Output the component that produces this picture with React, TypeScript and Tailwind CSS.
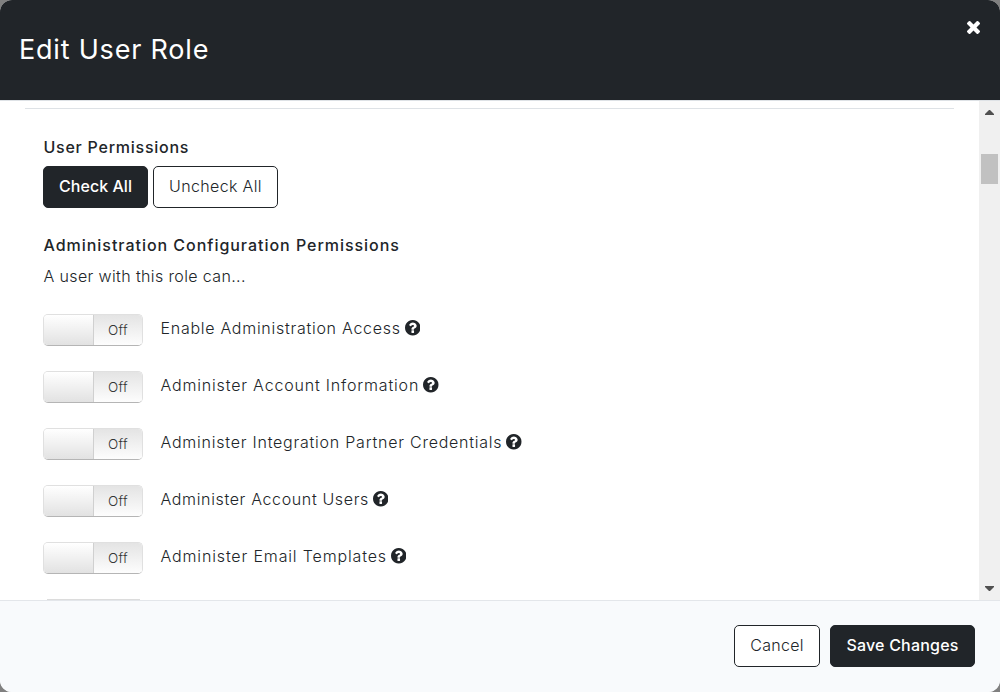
import { useState } from "react";

interface Permission {
  id: string;
  label: string;
  tracking: string;
}

const PERMISSIONS: Permission[] = [
  { id: "access", label: "Enable Administration Access", tracking: "tracking-[0.725px]" },
  { id: "account", label: "Administer Account Information", tracking: "tracking-[0.82px]" },
  { id: "integration", label: "Administer Integration Partner Credentials", tracking: "tracking-[0.765px]" },
  { id: "users", label: "Administer Account Users", tracking: "tracking-[0.64px]" },
  { id: "email", label: "Administer Email Templates", tracking: "tracking-[0.85px]" },
];

export default function App() {
  const [enabled, setEnabled] = useState<string[]>([]);

  const toggle = (id: string) =>
    setEnabled((prev) => (prev.includes(id) ? prev.filter((p) => p !== id) : [...prev, id]));

  return (
    <div className="h-[692px] w-[1000px] overflow-hidden bg-[#808080] font-['Inter',sans-serif] text-base font-light text-[#212529]">
      <div className="flex h-full flex-col overflow-hidden rounded-[12px] bg-white">
        {/* Header */}
        <header className="flex h-[101px] shrink-0 justify-between border-b border-[#dee2e6] bg-[#212529] pl-[19px] pr-[20.5px] text-white">
          <h1 className="pt-[32px] text-[27px] leading-9 font-normal tracking-[0.8px]">Edit User Role</h1>
          <button className="mt-[21px] h-[13px]" aria-label="Close">
            <CloseIcon />
          </button>
        </header>

        <div className="flex min-h-0 grow">
          <main className="min-w-0 grow overflow-hidden pt-[7px]">
            <hr className="mr-[25px] ml-[25px] border-[#dee2e6]" />

            <section className="pt-[26px] pl-[43px]">
              <h2 className="pl-[0.5px] leading-6 font-medium tracking-[0.75px]">User Permissions</h2>
              <div className="mt-[7px] flex gap-[5px]">
                <Button primary className="w-[105px] tracking-[0.05px]" onClick={() => setEnabled(PERMISSIONS.map((p) => p.id))}>
                  Check All
                </Button>
                <Button className="w-[125px] tracking-[0.35px]" onClick={() => setEnabled([])}>
                  Uncheck All
                </Button>
              </div>

              <h2 className="mt-[25px] pl-[0.5px] leading-6 font-medium tracking-[0.97px]">
                Administration Configuration Permissions
              </h2>
              <p className="mt-[7px] pl-[0.5px] leading-6 tracking-[0.37px]">A user with this role can...</p>

              <div className="mt-[26px] flex flex-col gap-[25px]">
                {PERMISSIONS.map((p) => (
                  <div key={p.id} className="flex h-8">
                    <Switch on={enabled.includes(p.id)} onClick={() => toggle(p.id)} />
                    <div className="ml-[17.5px] flex h-7 items-center gap-1">
                      <span className={`pb-px ${p.tracking}`}>{p.label}</span>
                      <HelpIcon />
                    </div>
                  </div>
                ))}
                {/* top edge of the next switch, cut by the footer */}
                <div className="ml-[4px] h-px w-[93px] bg-[#dcdcdc]" />
              </div>
            </section>
          </main>

          <Scrollbar />
        </div>

        {/* Footer */}
        <footer className="flex h-[92px] shrink-0 justify-end gap-[10px] border-t border-[#e3e6ea] bg-[#f8fafc] pt-6 pr-[25px]">
          <Button className="w-[86px] tracking-[0.3px]">Cancel</Button>
          <Button primary className="w-[145px] tracking-[0.2px]">Save Changes</Button>
        </footer>
      </div>
    </div>
  );
}

interface ButtonProps {
  children: string;
  className: string;
  primary?: boolean;
  onClick?: () => void;
}

function Button({ children, className, primary, onClick }: ButtonProps) {
  const look = primary ? "bg-[#212529] font-medium text-white" : "bg-white text-[#212529]";

  return (
    <button
      onClick={onClick}
      className={`flex h-[42px] items-center justify-center rounded-[5px] border border-[#212529] pb-[2px] whitespace-nowrap ${look} ${className}`}
    >
      {children}
    </button>
  );
}

function Switch({ on, onClick }: { on: boolean; onClick: () => void }) {
  return (
    <button
      role="switch"
      aria-checked={on}
      onClick={onClick}
      className={`flex h-8 w-[100px] shrink-0 overflow-hidden rounded-[5px] border border-[#e0e0e0] border-b-[#b5b5b5] text-[13.5px] ${on ? "flex-row-reverse" : ""}`}
    >
      <span className="h-full w-[50px] border-r border-[#d0d0d0] bg-linear-to-b from-white to-[#e2e2e2]" />
      <span className="flex h-full w-12 items-center justify-center bg-linear-to-b from-[#e4e4e4] to-[#fdfdfd] tracking-[0.3px] text-[#333]">
        {on ? "On" : "Off"}
      </span>
    </button>
  );
}

function CloseIcon() {
  return (
    <svg className="size-[13px]" viewBox="302 366 1188 1188" fill="currentColor">
      <path d="M1490 1322q0 40-28 68l-136 136q-28 28-68 28t-68-28l-294-294-294 294q-28 28-68 28t-68-28l-136-136q-28-28-28-68t28-68l294-294-294-294q-28-28-28-68t28-68l136-136q28-28 68-28t68 28l294 294 294-294q28-28 68-28t68 28l136 136q28 28 28 68t-28 68l-294 294 294 294q28 28 28 68z" />
    </svg>
  );
}

function HelpIcon() {
  return (
    <svg className="size-[15.5px]" viewBox="128 128 1536 1536" fill="currentColor">
      <path d="M1024 1376v-192q0-14-9-23t-23-9h-192q-14 0-23 9t-9 23v192q0 14 9 23t23 9h192q14 0 23-9t9-23zM1280 704q0-88-55.5-163t-138.5-116-170-41q-243 0-371 213-15 24 8 42l132 100q7 6 19 6 16 0 25-12 53-68 86-92 34-24 86-24 48 0 85.5 26t37.5 59q0 38-20 61t-68 45q-63 28-115.5 86.5t-52.5 125.5v36q0 14 9 23t23 9h192q14 0 23-9t9-23q0-19 21.5-49.5t54.5-49.5q32-18 49-28.5t46-35 44.5-48 28-60.5 12.5-81zM1664 896q0 209-103 385.5t-279.5 279.5-385.5 103-385.5-103-279.5-279.5-103-385.5 103-385.5 279.5-279.5 385.5-103 385.5 103 279.5 279.5 103 385.5z" />
    </svg>
  );
}

// Classic scrollbar with stepper arrows
function Scrollbar() {
  return (
    <div className="flex w-[21px] shrink-0 flex-col items-center bg-[#f0f0f0]">
      <svg className="mt-[9px] h-[5px] w-[9px]" viewBox="0 0 9 5" fill="#505050">
        <path d="M4 0h1l4 4v1H0V4z" />
      </svg>
      <div className="mt-[39px] h-[30px] w-[17px] bg-[#c1c1c1]" />
      <svg className="mt-auto mb-[9px] h-[5px] w-[9px]" viewBox="0 0 9 5" fill="#505050">
        <path d="M0 0h9v1L5 5H4L0 1z" />
      </svg>
    </div>
  );
}
